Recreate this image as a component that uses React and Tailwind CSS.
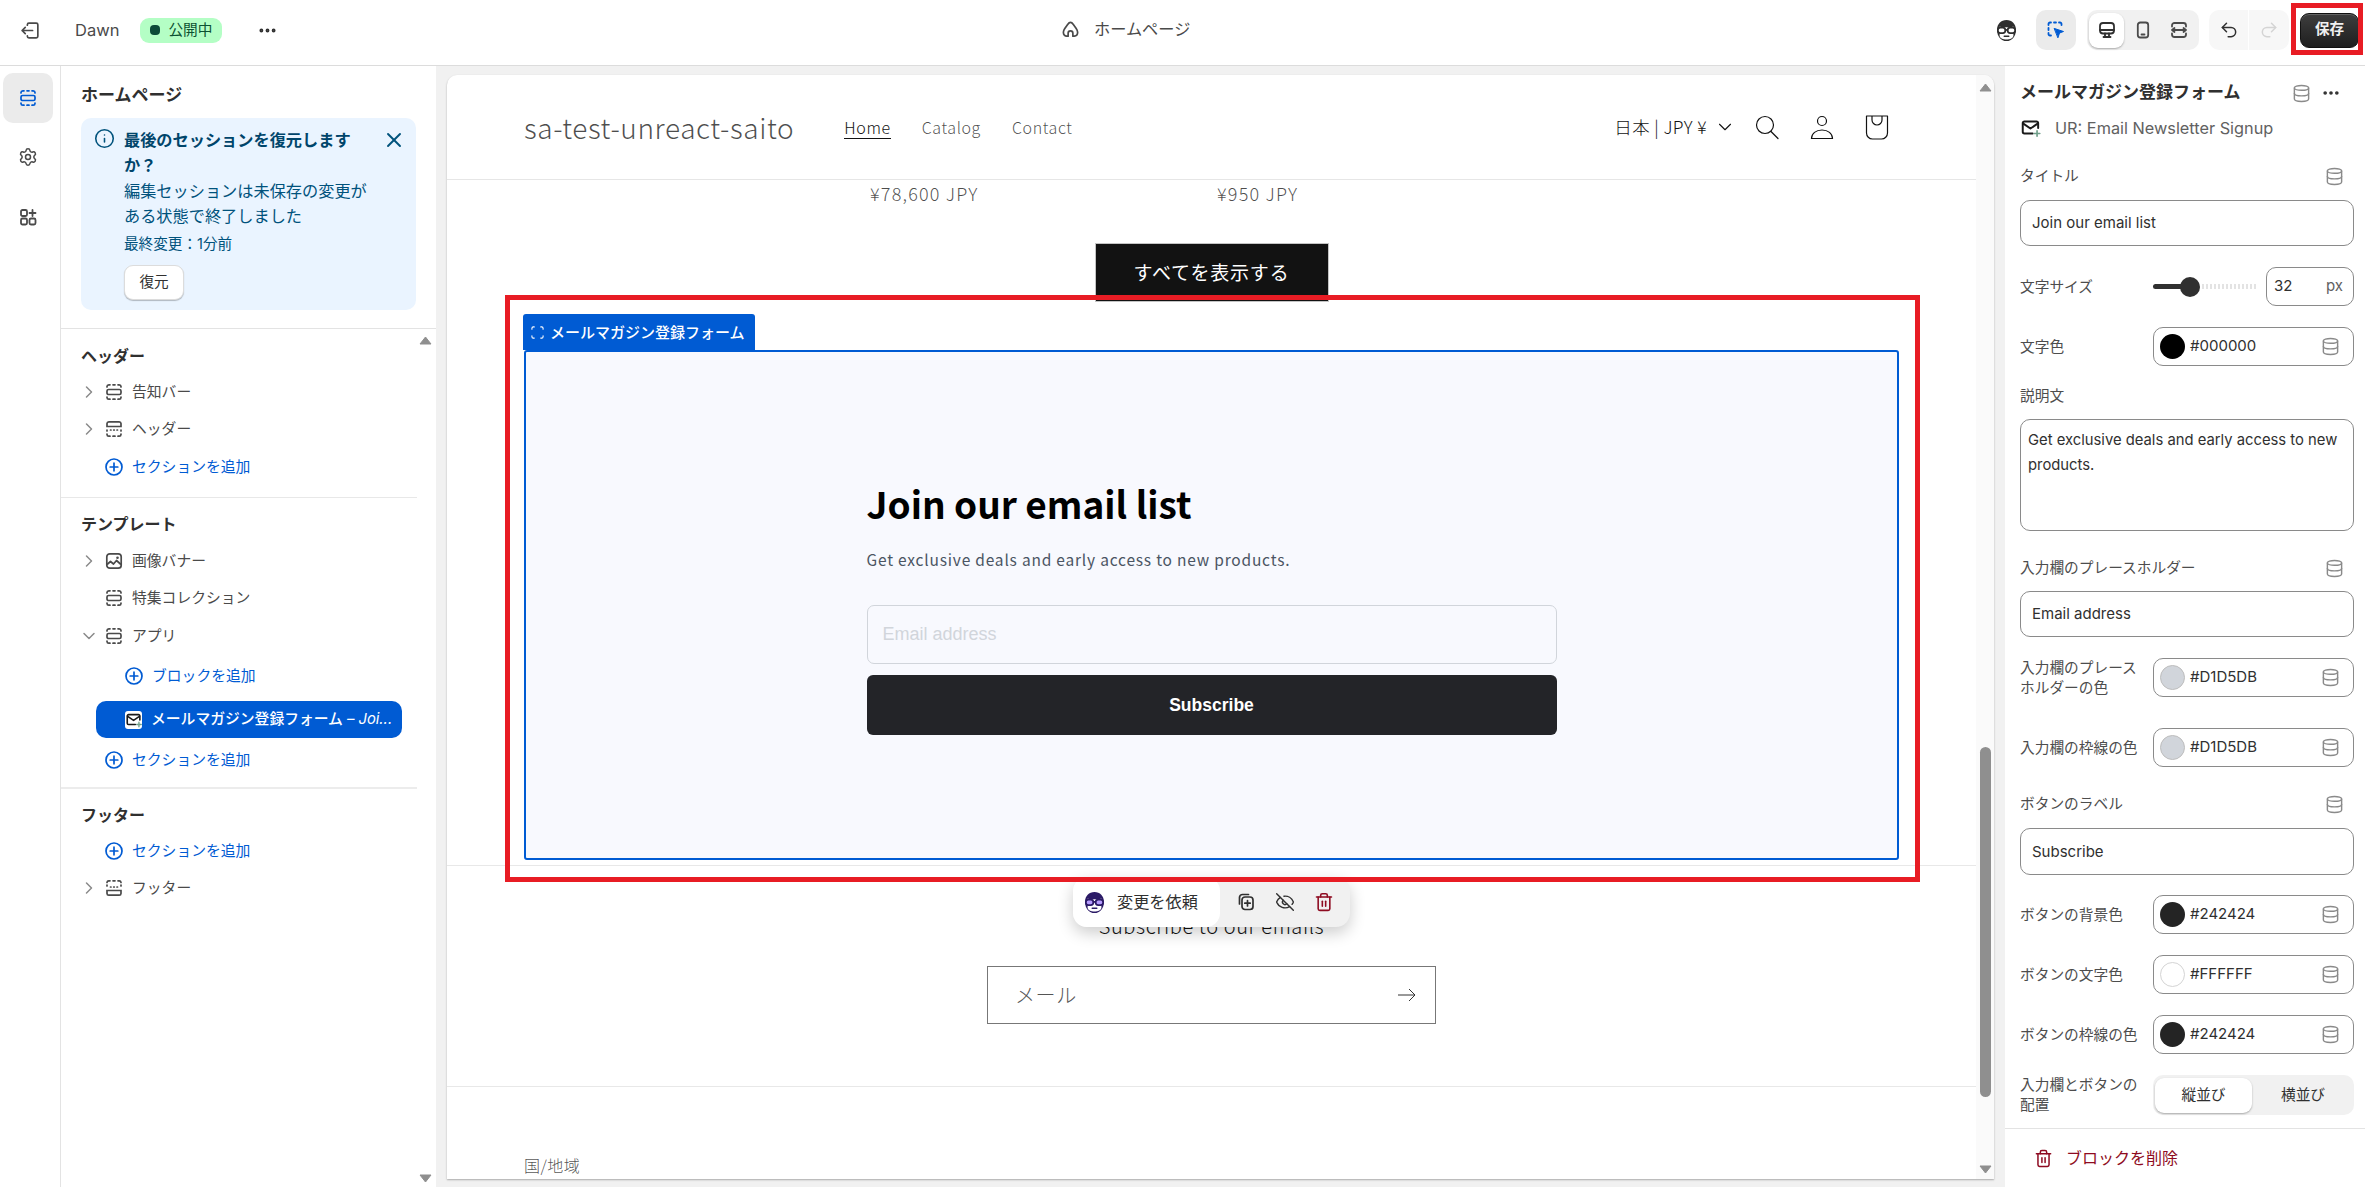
import React from "react";
import { Database, Undo2, Redo2, ChevronRight, ChevronDown, X, Info, Trash2, EyeOff, MoreHorizontal, Settings } from "lucide-react";

const S = "#4a4a4a";

function SectionIcon({ color = "#4a4a4a", size = 20 }) {
  return (
    <svg className="shrink-0" width={size} height={size} viewBox="0 0 20 20" fill="none" stroke={color} strokeWidth="1.7" strokeLinecap="round">
      <rect x="3" y="7.5" width="14" height="5" rx="1.6" />
      <path d="M3 5V4.5A1.8 1.8 0 0 1 4.8 2.8H6M9 2.8h2M14 2.8h1.2A1.8 1.8 0 0 1 17 4.5V5" />
      <path d="M3 15v.5a1.8 1.8 0 0 0 1.8 1.7H6M9 17.2h2M14 17.2h1.2A1.8 1.8 0 0 0 17 15.500V15" />
    </svg>
  );
}
function HeaderIcon() {
  return (
    <svg className="shrink-0" width="20" height="20" viewBox="0 0 20 20" fill="none" stroke={S} strokeWidth="1.7" strokeLinecap="round">
      <path d="M3 7.500V4.500A1.800 1.800 0 0 1 4.800 2.800h10.400A1.800 1.800 0 0 1 17 4.500v3z" />
      <path d="M3 11v1M17 11v1M3 15v.5a1.800 1.800 0 0 0 1.800 1.700H6M9 17.200h2M14 17.200h1.200A1.800 1.800 0 0 0 17 15.500V15M6.500 11h.5M9.700 11h.6M13 11h.5" />
    </svg>
  );
}
function FooterIcon() {
  return (
    <svg className="shrink-0" width="20" height="20" viewBox="0 0 20 20" fill="none" stroke={S} strokeWidth="1.7" strokeLinecap="round">
      <path d="M3 12.500v3a1.800 1.800 0 0 0 1.800 1.700h10.400a1.800 1.800 0 0 0 1.800-1.700v-3z" />
      <path d="M3 8V7M17 8V7M3 4.500V4.300A1.800 1.800 0 0 1 4.800 2.800H6M9 2.800h2M14 2.800h1.200A1.800 1.800 0 0 1 17 4.300v.2M6.500 9h.5M9.700 9h.6M13 9h.5" />
    </svg>
  );
}
function ImageIcon() {
  return (
    <svg className="shrink-0" width="20" height="20" viewBox="0 0 20 20" fill="none" stroke={S} strokeWidth="1.7" strokeLinejoin="round">
      <rect x="2.800" y="2.800" width="14.400" height="14.400" rx="3" />
      <path d="M3 13.500l3.500-3 3 2.500 3-3.500 4.500 4" />
      <circle cx="13.500" cy="6.800" r="1.300" fill={S} stroke="none" />
    </svg>
  );
}
function PlusCircle() {
  return (
    <svg className="shrink-0" width="20" height="20" viewBox="0 0 20 20" fill="none" stroke="#005bd3" strokeWidth="1.700" strokeLinecap="round">
      <circle cx="10" cy="10" r="8" />
      <path d="M10 6.200v7.600M6.200 10h7.600" />
    </svg>
  );
}
function MailPlus({ color = "#1a1a1a", size = 18 }) {
  return (
    <svg className="shrink-0" width={size} height={size} viewBox="0 0 20 20" fill="none" strokeLinecap="round" strokeLinejoin="round">
      <path d="M16.500 10V5.500A1.500 1.500 0 0 0 15 4H4A1.500 1.500 0 0 0 2.500 5.500v8A1.500 1.500 0 0 0 4 15h7.500" stroke={color} strokeWidth="1.800" />
      <path d="M3 6l6.500 4.500L16 6" stroke={color} strokeWidth="1.800" />
      <path d="M15.500 12.500v5M13 15h5" stroke="#6f9f8a" strokeWidth="1.500" />
    </svg>
  );
}
function Sidekick({ face = "#2e2e2e", lens = "#ffffff", size = 23 }) {
  return (
    <svg className="shrink-0" width={size} height={size} viewBox="0 0 20 20">
      <path d="M10 .8c4.800 0 8.200 3.400 8.200 8.700 0 5.600-3.500 9.700-8.200 9.700s-8.200-4.100-8.200-9.700C1.800 4.200 5.200.8 10 .8z" fill={face} />
      <path d="M4 6.500c3 1 9 1 12 0v8c0 2-3 3.300-6 3.300s-6-1.300-6-3.300z" fill="#ffffff" />
      <rect x="2.500" y="7.500" width="6.500" height="4.800" rx="2.200" fill={lens} stroke={face} strokeWidth="1.500" />
      <rect x="11" y="7.500" width="6.500" height="4.800" rx="2.200" fill={lens} stroke={face} strokeWidth="1.500" />
      <path d="M8.500 9.500h3" stroke={face} strokeWidth="1.500" />
      <path d="M8 15h4" stroke={face} strokeWidth="1.200" strokeLinecap="round" />
    </svg>
  );
}
function Db({ size = 19 }) {
  return <Database className="shrink-0" size={size} color="#8a8a8a" strokeWidth={1.800} />;
}

function Label({ children }) {
  return <div className="text-[14.700px] leading-[20px] text-[#4d4d4d]">{children}</div>;
}
function LabelRow({ children, mt }) {
  return (
    <div className={`flex h-[24px] items-center justify-between pr-[10px] ${mt}`}>
      <Label>{children}</Label>
      <Db />
    </div>
  );
}
function TextBox({ children, mt, h = "h-[46px]" }) {
  return (
    <div className={`flex ${h} items-center rounded-[10px] border border-[#8a8a8a] bg-white pl-[11px] pt-px text-[15px] text-[#303030] ${mt}`}>
      {children}
    </div>
  );
}
function ColorRow({ label, value, swatch, mt }) {
  return (
    <div className={`flex h-[39px] items-center ${mt}`}>
      <div className="mr-[13px] w-[120px] text-[14.700px] leading-[20px] text-[#4d4d4d]">{label}</div>
      <div className="flex h-[39px] flex-1 items-center rounded-[10px] border border-[#8a8a8a] bg-white pl-[6px] pr-[13px]">
        <span className={`h-[25px] w-[25px] rounded-full ${swatch}`} />
        <span className="ml-[5px] flex-1 text-[15px] text-[#303030]">{value}</span>
        <Db />
      </div>
    </div>
  );
}

function TreeRow({ chevron, icon, children }) {
  return (
    <div className="flex h-[37.500px] items-center pl-[18px] text-[14.800px] text-[#4a4a4a]">
      <span className="flex w-[20px] justify-center">
        {chevron === "right" && <ChevronRight size={20} color="#8a8a8a" strokeWidth={1.800} />}
        {chevron === "down" && <ChevronDown size={20} color="#8a8a8a" strokeWidth={1.800} />}
      </span>
      <span className="ml-[5px] flex w-[20px] justify-center">{icon}</span>
      <span className="ml-[8px]">{children}</span>
    </div>
  );
}
function AddRow({ children, inset, mt = "" }) {
  return (
    <div className={`flex h-[37.500px] items-center text-[14.800px] text-[#005bd3] ${inset ? "pl-[63px]" : "pl-[43px]"} ${mt}`}>
      <PlusCircle />
      <span className="ml-[8px]">{children}</span>
    </div>
  );
}
function SectionTitle({ children }) {
  return <div className="pl-[20px] text-[16px] font-bold leading-[24px] text-[#303030]">{children}</div>;
}

function Triangle({ up }) {
  return (
    <svg width="13" height="9" viewBox="0 0 13 9">
      <path d={up ? "M6.500 1l5.500 7H1z" : "M6.500 8L1 1h11z"} fill="#8f8f8f" stroke="#8f8f8f" strokeLinejoin="round" />
    </svg>
  );
}

export default function App() {
  return (
    <div className="relative flex h-[1187px] w-[2365px] flex-col overflow-hidden bg-[#f1f1f1] font-['Inter','Noto_Sans_CJK_JP',sans-serif]">
      {/* Top bar */}
      <header className="relative flex h-[66px] shrink-0 items-center border-b border-[#dcdcdc] bg-white pb-[5px]">
        <svg className="ml-[20px]" width="21" height="21" viewBox="0 0 20 20" fill="none" stroke={S} strokeWidth="1.600" strokeLinecap="round" strokeLinejoin="round">
          <path d="M7 5V4.500A1.500 1.500 0 0 1 8.500 3h7A1.500 1.500 0 0 1 17 4.500v11a1.500 1.500 0 0 1-1.500 1.500h-7A1.500 1.500 0 0 1 7 15.500V15" />
          <path d="M12 10H2M5 7l-3 3 3 3" />
        </svg>
        <span className="ml-[34px] text-[16.500px] text-[#4a4a4a]">Dawn</span>
        <span className="ml-[21px] flex h-[25px] w-[82px] items-center justify-center gap-[8px] rounded-[9px] bg-[#b4fec5] text-[14.700px] text-[#0c5132]">
          <span className="h-[10px] w-[10px] rounded-[4px] bg-[#0c4a37]" />
          公開中
        </span>
        <MoreHorizontal className="ml-[35px]" size={21} color="#303030" strokeWidth={2.400} />

        <div className="absolute left-[1061px] top-[17px] flex items-center gap-[14px] text-[16.200px] text-[#4a4a4a]">
          <svg width="19" height="19" viewBox="0 0 20 20" fill="none" stroke={S} strokeWidth="1.800" strokeLinejoin="round" strokeLinecap="round">
            <path d="M10 2.500c1.200 0 2 .8 3 2.200l3 4.300c1 1.500 1.500 2.600 1.500 4 0 2.500-1.500 4-3.500 4h-1.500v-3a2.500 2.500 0 0 0-5 0v3H6c-2 0-3.500-1.500-3.500-4 0-1.400.5-2.500 1.500-4l3-4.300c1-1.400 1.800-2.200 3-2.200z" />
          </svg>
          ホームページ
        </div>

        <div className="ml-auto flex items-center pr-[6px]">
          <Sidekick />
          <div className="ml-[18px] flex h-[40px] w-[40px] items-center justify-center rounded-[10px] bg-[#ebebeb]">
            <svg width="20" height="20" viewBox="0 0 20 20" fill="none" stroke="#005bd3" strokeWidth="1.800" strokeLinecap="round">
              <path d="M2.500 5V4A1.500 1.500 0 0 1 4 2.500h1M8 2.500h2M13 2.500h1A1.500 1.500 0 0 1 15.500 4v1M2.500 8v2M2.500 13v1A1.500 1.500 0 0 0 4 15.500h1" />
              <path d="M8.500 8.500l9 3-4 1.500-1.500 4.500z" fill="#005bd3" strokeLinejoin="round" strokeWidth="1" />
            </svg>
          </div>
          <div className="ml-[11px] flex h-[40px] w-[112px] items-center rounded-[10px] bg-[#f1f1f1] px-[2px]">
            <div className="flex h-[35px] w-[35px] items-center justify-center rounded-[9px] bg-white shadow-[0_1px_2px_rgba(0,0,0,0.3)]">
              <svg width="20" height="20" viewBox="0 0 20 20" fill="none" stroke="#303030" strokeWidth="1.800" strokeLinecap="round" strokeLinejoin="round">
                <rect x="3" y="3" width="14" height="10.500" rx="3" />
                <path d="M3 10h14M8 13.500V17M12 13.500V17M6.500 17h7" />
              </svg>
            </div>
            <div className="flex h-[35px] w-[37px] items-center justify-center">
              <svg width="20" height="20" viewBox="0 0 20 20" fill="none" stroke="#4a4a4a" strokeWidth="1.800" strokeLinecap="round">
                <rect x="4.800" y="2.500" width="10.400" height="15" rx="2.500" />
                <path d="M8.500 14.500h3" />
              </svg>
            </div>
            <div className="flex h-[35px] w-[36px] items-center justify-center">
              <svg width="20" height="20" viewBox="0 0 20 20" fill="none" stroke="#4a4a4a" strokeWidth="1.800" strokeLinecap="round" strokeLinejoin="round">
                <path d="M3 6.500V5.500A2.500 2.500 0 0 1 5.500 3h9A2.500 2.500 0 0 1 17 5.500v1M3 13.500v1A2.500 2.500 0 0 0 5.500 17h9a2.500 2.500 0 0 0 2.500-2.500v-1" />
                <path d="M3 10h14M5.500 8L3 10l2.500 2M14.500 8l2.500 2-2.500 2" />
              </svg>
            </div>
          </div>
          <div className="ml-[10px] flex h-[40px] w-[80px] items-center rounded-[10px] bg-[#f7f7f7]">
            <div className="flex h-[40px] w-[40px] items-center justify-center border-r border-white">
              <Undo2 size={20} color="#303030" strokeWidth={1.800} />
            </div>
            <div className="flex h-[40px] w-[40px] items-center justify-center">
              <Redo2 size={20} color="#d4d4d4" strokeWidth={1.800} />
            </div>
          </div>
          <div className="ml-[11px] flex h-[35px] w-[59px] items-center justify-center rounded-[9px] border border-[#111] bg-gradient-to-b from-[#3e3e3e] to-[#1f1f1f] text-[14.600px] font-bold text-[#f0f0f0] shadow-[inset_0_1px_0_rgba(255,255,255,0.2)]">
            保存
          </div>
        </div>
      </header>

      {/* Body */}
      <div className="flex min-h-0 flex-1">
        {/* Rail */}
        <nav className="flex w-[61px] shrink-0 flex-col items-start border-r border-[#e3e3e3] bg-white pl-[3px] pt-[7px]">
          <div className="flex h-[50px] w-[50px] items-center justify-center rounded-[10px] bg-[#ebebeb]">
            <SectionIcon color="#005bd3" size={20} />
          </div>
          <div className="mt-[9px] flex h-[50px] w-[50px] items-center justify-center">
            <Settings size={20} color="#4a4a4a" strokeWidth={1.800} />
          </div>
          <div className="mt-[10px] flex h-[50px] w-[50px] items-center justify-center">
            <svg width="20" height="20" viewBox="0 0 20 20" fill="none" stroke="#4a4a4a" strokeWidth="1.800" strokeLinecap="round" strokeLinejoin="round">
              <rect x="3" y="3" width="6" height="6" rx="1.500" />
              <rect x="3" y="11.500" width="6" height="6" rx="1.500" />
              <rect x="11.500" y="11.500" width="6" height="6" rx="1.500" />
              <path d="M14.500 3v6M11.500 6h6" />
            </svg>
          </div>
        </nav>

        {/* Sidebar */}
        <aside className="relative flex w-[375px] shrink-0 flex-col bg-white">
          <div className="pl-[20px] pt-[17px] text-[17px] font-bold leading-[24px] text-[#303030]">ホームページ</div>
          <div className="mx-[20px] mt-[11px] flex h-[192px] rounded-[10px] bg-[#eaf4ff] pl-[13px] pr-[10px] pt-[10px]">
            <Info className="shrink-0" size={21} color="#00527c" strokeWidth={1.800} />
            <div className="ml-[9px] flex-1 text-[16.200px] leading-[25px] text-[#00527c]">
              <div className="w-[240px] font-bold text-[#00456b]">最後のセッションを復元しますか？</div>
              <div className="mt-px w-[250px] [word-break:keep-all]">編集セッションは未保存の変更が<br />ある状態で終了しました</div>
              <div className="mt-[3px] text-[14.600px] leading-[25px]">最終変更：1分前</div>
              <div className="mt-[8px] flex h-[35px] w-[60px] items-center justify-center rounded-[9px] border border-[#dcdcdc] bg-white text-[14.600px] text-[#303030] shadow-[0_1px_1px_rgba(0,0,0,0.25)]">復元</div>
            </div>
            <X className="shrink-0" size={24} color="#00527c" strokeWidth={1.900} />
          </div>
          <div className="mt-[18px] h-px w-full bg-[#e3e3e3]" />
          <div className="mr-[19px] h-[169px] border-b border-[#e8e8e8] pt-[15px]">
            <SectionTitle>ヘッダー</SectionTitle>
            <div className="mt-[5px]">
              <TreeRow chevron="right" icon={<SectionIcon />}>告知バー</TreeRow>
              <TreeRow chevron="right" icon={<HeaderIcon />}>ヘッダー</TreeRow>
              <AddRow>セクションを追加</AddRow>
            </div>
          </div>
          <div className="mr-[19px] h-[291px] border-b-[2px] border-[#ececec] pt-[14px]">
            <SectionTitle>テンプレート</SectionTitle>
            <div className="mt-[6px]">
              <TreeRow chevron="right" icon={<ImageIcon />}>画像バナー</TreeRow>
              <TreeRow icon={<SectionIcon />}>特集コレクション</TreeRow>
              <TreeRow chevron="down" icon={<SectionIcon />}>アプリ</TreeRow>
              <AddRow inset mt="mt-[3px]">ブロックを追加</AddRow>
              <div className="ml-[35px] mt-[6px] flex h-[37px] w-[306px] items-center rounded-[10px] bg-[#005bd3] pl-[29px] text-[14.800px] font-medium text-white">
                <span className="flex h-[18px] w-[17px] items-center justify-center rounded-[3px] bg-white">
                  <MailPlus />
                </span>
                <span className="ml-[9px] whitespace-nowrap">メールマガジン登録フォーム <i className="font-normal">– Joi...</i></span>
              </div>
              <AddRow mt="mt-[3px]">セクションを追加</AddRow>
            </div>
          </div>
          <div className="pt-[14px]">
            <SectionTitle>フッター</SectionTitle>
            <div className="mt-[5px]">
              <AddRow>セクションを追加</AddRow>
              <TreeRow chevron="right" icon={<FooterIcon />}>フッター</TreeRow>
            </div>
          </div>
          <span className="absolute right-[4px] top-[270px] flex"><Triangle up /></span>
          <span className="absolute bottom-[4px] right-[4px] flex"><Triangle /></span>
        </aside>

        {/* Preview */}
        <main className="flex min-w-0 flex-1 pb-[8px] pl-[11px] pr-[11px] pt-[9px] font-['Noto_Sans_CJK_JP',sans-serif]">
          <div className="relative flex min-w-0 flex-1 overflow-hidden rounded-t-[10px] bg-white shadow-[0_1px_2px_rgba(0,0,0,0.3)]">
            <div className="w-[1529px] shrink-0 overflow-hidden">
              <div className="flex h-[105px] items-center border-b border-[#e6e6e6] px-[77px] tracking-[0.6px] text-[#121212bf]">
                <span className="text-[28px] font-light">sa-test-unreact-saito</span>
                <nav className="ml-[50px] flex items-center gap-[31px] text-[16px] font-light">
                  <span className="border-b border-[#121212] leading-[22px] text-[#121212]">Home</span>
                  <span className="leading-[22px]">Catalog</span>
                  <span className="leading-[22px]">Contact</span>
                </nav>
                <div className="ml-auto flex items-center pr-[9px] text-[#121212]">
                  <span className="text-[17.500px] font-light tracking-[0.4px]">日本 | JPY ¥</span>
                  <ChevronDown className="ml-[7px]" size={22} strokeWidth={1.200} />
                  <svg className="ml-[18px]" width="26" height="26" viewBox="0 0 26 26" fill="none" stroke="#121212" strokeWidth="1.200" strokeLinecap="round">
                    <circle cx="11" cy="11" r="8.500" />
                    <path d="M17 17.500l7 7" />
                  </svg>
                  <svg className="ml-[29px]" width="26" height="26" viewBox="0 0 26 26" fill="none" stroke="#121212" strokeWidth="1.200">
                    <circle cx="13" cy="7" r="4.500" />
                    <path d="M2.500 24.500c0-5 4.500-8.500 10.500-8.500s10.500 3.500 10.500 8.500z" />
                  </svg>
                  <svg className="ml-[29px]" width="26" height="26" viewBox="0 0 26 26" fill="none" stroke="#121212" strokeWidth="1.200" strokeLinejoin="round">
                    <path d="M2.500 2h21v17a6 6 0 0 1-6 6h-9a6 6 0 0 1-6-6z" />
                    <path d="M8 2v4a5 5 0 0 0 10 0V2" />
                  </svg>
                </div>
              </div>
              <div className="flex h-[27px] items-center pl-[423px] text-[18px] font-light tracking-[1.200px] text-[#121212bf]">
                <span className="w-[347px]">¥78,600 JPY</span>
                <span>¥950 JPY</span>
              </div>
              <div className="mx-auto mt-[36px] flex h-[59px] w-[234px] items-center justify-center border border-[#c4c4c4] bg-[#121212] text-[19px] tracking-[0.8px] text-white">
                すべてを表示する
              </div>
              <div className="relative mx-[77px] mt-[48px] h-[510px] rounded-[3px] border-2 border-[#005bd3] bg-[#f8f9fe]">
                <div className="absolute -left-[3px] -top-[38px] flex h-[36px] w-[232px] items-center gap-[6px] rounded-t-[3px] bg-[#005bd3] pl-[8px] text-[15px] font-medium text-white">
                  <svg width="13" height="13" viewBox="0 0 14 14" fill="none" stroke="#ffffff" strokeWidth="1.200" strokeLinecap="round">
                    <path d="M1 3.500V2.500A1.500 1.500 0 0 1 2.500 1h1M10.500 1h1A1.500 1.500 0 0 1 13 2.500v1M1 10.500v1A1.500 1.500 0 0 0 2.500 13h1M10.500 13h1a1.500 1.500 0 0 0 1.500-1.500v-1" />
                  </svg>
                  メールマガジン登録フォーム
                </div>
                <div className="mx-auto w-[690px] pt-[127px]">
                  <div className="text-[37px] font-bold leading-[48px] text-black">Join our email list</div>
                  <div className="mt-[20px] text-[15.500px] leading-[24px] tracking-[0.8px] text-[#4b5563]">Get exclusive deals and early access to new products.</div>
                  <div className="mt-[34px] flex h-[59px] items-center rounded-[7px] border border-[#d1d5db] pl-[15px] font-['Liberation_Sans',sans-serif] text-[18px] text-[#d1d5db]">Email address</div>
                  <div className="mt-[11px] flex h-[60px] items-center justify-center rounded-[6px] bg-[#232428] font-['Liberation_Sans',sans-serif] text-[17.500px] font-bold text-white">Subscribe</div>
                </div>
              </div>
              <div className="mt-[5px] h-px bg-[#e8e8e8]" />
              <div className="mt-[46px] text-center text-[20px] font-light leading-[28px] tracking-[0.6px] text-[#121212]">Subscribe to our emails</div>
              <div className="mx-auto mt-[26px] flex h-[58px] w-[449px] items-center justify-between border border-[#777] pl-[27px] pr-[19px] text-[20px] font-light tracking-[0.6px] text-[#555]">
                メール
                <svg width="18" height="14" viewBox="0 0 18 14" fill="none" stroke="#333" strokeWidth="1">
                  <path d="M0 7h17M11 1l6 6-6 6" />
                </svg>
              </div>
              <div className="mt-[62px] h-px bg-[#e8e8e8]" />
              <div className="mt-[68px] pl-[77px] text-[16px] font-light leading-[20px] tracking-[0.5px] text-[#121212bf]">国/地域</div>
            </div>

            {/* Preview scrollbar */}
            <div className="relative flex-1 bg-[#fafafa]">
              <span className="absolute left-[3px] top-[8px] flex"><Triangle up /></span>
              <div className="absolute left-[4px] top-[672px] h-[350px] w-[11px] rounded-full bg-[#8f8f8f]" />
              <span className="absolute bottom-[5px] left-[3px] flex"><Triangle /></span>
            </div>

            {/* Floating toolbar */}
            <div className="absolute left-[626px] top-[802px] flex h-[50px] w-[277px] overflow-hidden rounded-[14px] bg-[#f1f1f1] font-['Inter','Noto_Sans_CJK_JP',sans-serif] shadow-[0_6px_16px_rgba(0,0,0,0.2)]">
              <div className="flex w-[147px] items-center gap-[11px] rounded-r-[14px] bg-white pl-[10px] text-[16.200px] text-[#303030]">
                <Sidekick face="#2b1a66" lens="#b79cff" />
                変更を依頼
              </div>
              <div className="flex flex-1 items-center gap-[19px] pl-[16px]">
                <svg width="20" height="20" viewBox="0 0 20 20" fill="none" stroke="#303030" strokeWidth="1.700" strokeLinecap="round">
                  <rect x="6" y="5" width="11" height="12.500" rx="3" />
                  <path d="M3.500 12V5.500A3 3 0 0 1 6.500 2.500h6M11.500 8.500v5.500M8.800 11.200h5.400" />
                </svg>
                <EyeOff size={20} color="#303030" strokeWidth={1.700} />
                <Trash2 size={20} color="#8e0b21" strokeWidth={1.900} />
              </div>
            </div>
          </div>
        </main>

        {/* Right panel */}
        <aside className="flex w-[360px] shrink-0 flex-col bg-white">
          <div className="flex-1 pl-[15px] pr-[11px]">
            <div className="mt-[14px] flex h-[26px] items-center">
              <span className="flex-1 text-[17px] font-bold text-[#303030]">メールマガジン登録フォーム</span>
              <Db />
              <MoreHorizontal className="ml-[10px] mr-[13px]" size={20} color="#303030" strokeWidth={2.400} />
            </div>
            <div className="mt-[10px] flex h-[24px] items-center text-[16.300px] text-[#616161]">
              <MailPlus size={22} />
              <span className="ml-[13px]">UR: Email Newsletter Signup</span>
            </div>
            <LabelRow mt="mt-[24px]">タイトル</LabelRow>
            <TextBox mt="mt-[12px]">Join our email list</TextBox>
            <div className="mt-[21px] flex h-[39px] items-center">
              <div className="w-[133px]"><Label>文字サイズ</Label></div>
              <div className="relative flex h-[20px] w-[103px] items-center">
                <div className="h-[5px] w-[37px] rounded-l-full bg-[#303030]" />
                <div className="h-[5px] w-[66px] bg-[repeating-linear-gradient(90deg,#e3e3e3_0,#e3e3e3_2px,transparent_2px,transparent_4px)]" />
                <div className="absolute left-[27px] h-[20px] w-[20px] rounded-full bg-[#303030]" />
              </div>
              <div className="ml-[10px] flex h-[39px] flex-1 items-center justify-between rounded-[10px] border border-[#8a8a8a] pl-[7px] pr-[10px] text-[15px] text-[#303030]">
                32<span className="text-[#616161]">px</span>
              </div>
            </div>
            <ColorRow mt="mt-[21px]" label="文字色" value="#000000" swatch="bg-black" />
            <div className="mt-[18px] flex h-[24px] items-center"><Label>説明文</Label></div>
            <div className="mt-[11px] h-[112px] rounded-[10px] border border-[#8a8a8a] pl-[7px] pr-[4px] pt-[8px] text-[14.800px] leading-[25px] text-[#303030]">
              Get exclusive deals and early access to new products.
            </div>
            <LabelRow mt="mt-[25px]">入力欄のプレースホルダー</LabelRow>
            <TextBox mt="mt-[11px]">Email address</TextBox>
            <ColorRow mt="mt-[21px]" label="入力欄のプレースホルダーの色" value="#D1D5DB" swatch="bg-[#d1d5db] border border-[#bdbdbd]" />
            <ColorRow mt="mt-[31px]" label="入力欄の枠線の色" value="#D1D5DB" swatch="bg-[#d1d5db] border border-[#bdbdbd]" />
            <LabelRow mt="mt-[25px]">ボタンのラベル</LabelRow>
            <TextBox mt="mt-[12px]" h="h-[47px]">Subscribe</TextBox>
            <ColorRow mt="mt-[20px]" label="ボタンの背景色" value="#242424" swatch="bg-[#242424]" />
            <ColorRow mt="mt-[21px]" label="ボタンの文字色" value="#FFFFFF" swatch="bg-white border border-[#d4d4d4]" />
            <ColorRow mt="mt-[21px]" label="ボタンの枠線の色" value="#242424" swatch="bg-[#242424]" />
            <div className="mt-[21px] flex h-[40px] items-center">
              <div className="mr-[13px] w-[120px]"><Label>入力欄とボタンの配置</Label></div>
              <div className="flex h-[40px] flex-1 items-center rounded-[10px] bg-[#f1f1f1] pl-[2px] text-[14.700px] text-[#303030]">
                <div className="flex h-[35px] w-[97px] items-center justify-center rounded-[9px] bg-white shadow-[0_1px_2px_rgba(0,0,0,0.3)]">縦並び</div>
                <div className="flex h-[35px] flex-1 items-center justify-center">横並び</div>
              </div>
            </div>
          </div>
          <div className="flex h-[59px] shrink-0 items-center border-t border-[#e3e3e3] pl-[29px] text-[16px] text-[#8e0b21]">
            <Trash2 size={19} color="#8e0b21" strokeWidth={1.900} />
            <span className="ml-[13px]">ブロックを削除</span>
          </div>
        </aside>
      </div>

      {/* Red annotation rectangles */}
      <div className="pointer-events-none absolute left-[505px] top-[295px] h-[587px] w-[1415px] border-[5px] border-[#e81c24]" />
      <div className="pointer-events-none absolute left-[2291px] top-[3px] h-[52px] w-[72px] border-[5px] border-[#e81c24]" />
    </div>
  );
}
